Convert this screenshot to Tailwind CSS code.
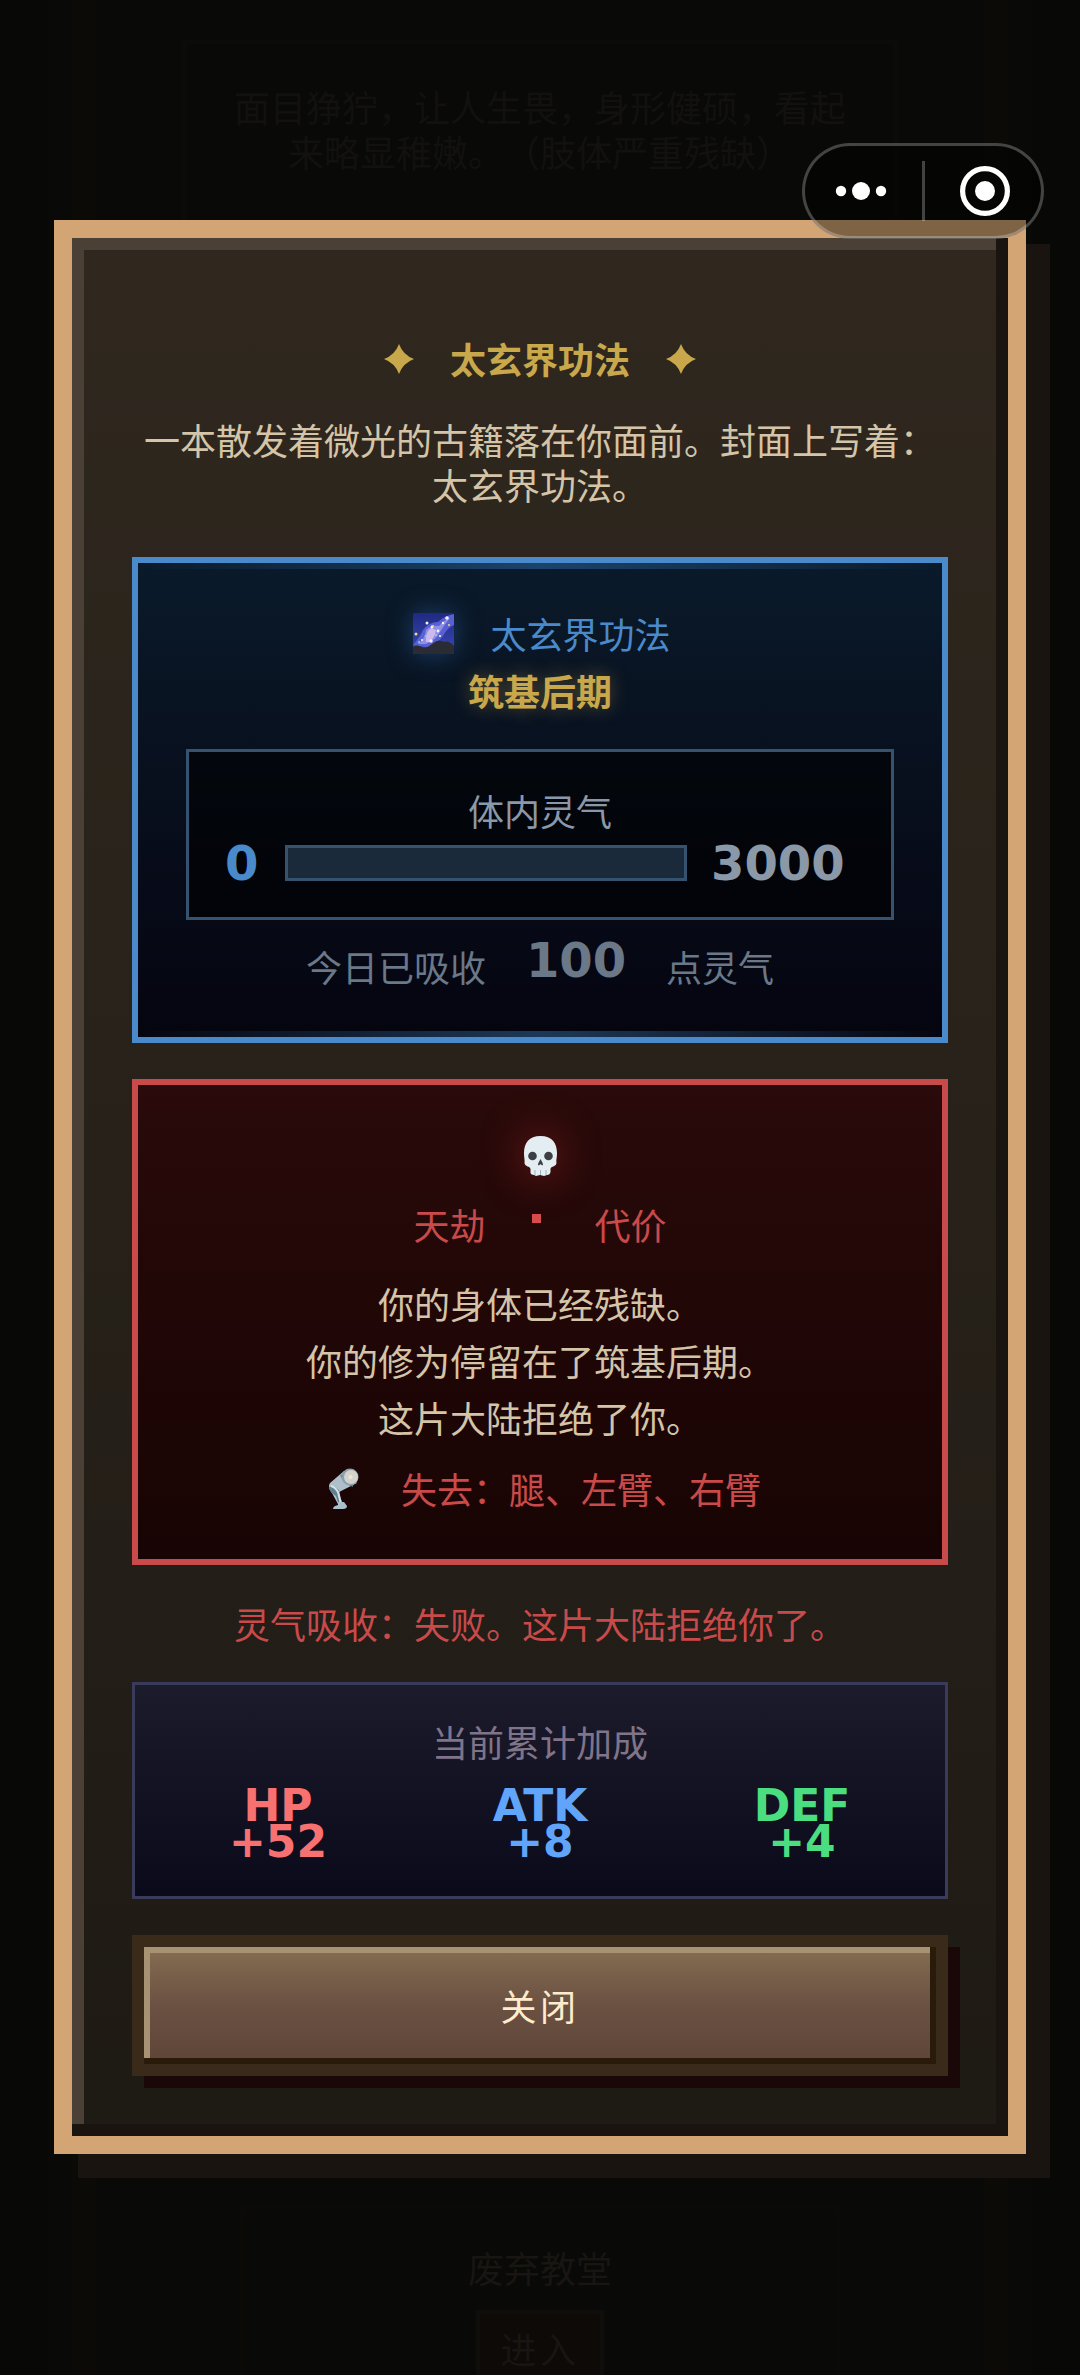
<!DOCTYPE html>
<html lang="zh-CN">
<head>
<meta charset="utf-8">
<meta name="viewport" content="width=device-width, initial-scale=1">
<title>太玄界功法</title>
<script src="https://cdn.jsdelivr.net/npm/@tailwindcss/browser@4"></script>
</head>
<body class="relative min-h-screen overflow-x-hidden bg-[#090907] font-['Noto_Sans_CJK_SC',sans-serif] text-4xl/[45px] [text-spacing-trim:space-all]">

  <!-- Dimmed game screen behind the dialog -->
  <div class="absolute inset-0 flex justify-center border-x-[48px] border-[#080806] px-6" aria-hidden="true">
    <div class="flex w-full flex-col items-center justify-between border-x-[24px] border-[#0b0a07] px-10">
      <div class="mt-10 w-full max-w-[716px] border-4 border-[#0c0b08] px-10 pt-10 pb-16 text-center text-[#12110f]">面目狰狞，让人生畏，身形健硕，看起来略显稚嫩。（肢体严重残缺）</div>
      <div class="flex w-full max-w-[600px] flex-col items-center gap-5 border-x-4 border-t-4 border-[#0c0a07] pt-9 text-[#181512]">
        <span>废弃教堂</span>
        <span class="border-4 border-b-0 border-[#100e0b] bg-[#0d0a08] px-5 pt-3 pb-1 tracking-widest">进入</span>
      </div>
    </div>
  </div>

  <!-- Dialog -->
  <div class="relative px-[5%] pt-[220px] pb-[220px]">
    <main role="dialog" aria-labelledby="title" class="border-[18px] border-[#d4a574] bg-linear-to-b from-[#30281f] to-[#1e1a14] shadow-[24px_24px_0_#1a1410]">
      <div class="flex flex-col px-[60px] pt-[98px] pb-[60px] text-center shadow-[inset_-12px_-12px_0_#1a1410,inset_12px_12px_0_#4a4035]">

        <h1 id="title" class="flex items-center justify-center gap-9 font-bold text-[#c9a84c]">
          <svg class="size-[30px]" viewBox="0 0 30 30" fill="currentColor"><path d="M15 0Q19 11 30 15Q19 19 15 30Q11 19 0 15Q11 11 15 0Z"/></svg>
          太玄界功法
          <svg class="size-[30px]" viewBox="0 0 30 30" fill="currentColor"><path d="M15 0Q19 11 30 15Q19 19 15 30Q11 19 0 15Q11 11 15 0Z"/></svg>
        </h1>
        <p class="mt-9 text-[#d4c4a8]">一本散发着微光的古籍落在你面前。封面上写着：<br>太玄界功法。</p>

        <!-- Technique card -->
        <section class="relative mt-[50px] border-[6px] border-[#4a8acb] bg-linear-to-b from-[#0a1a2a] to-[#050510] p-12">
          <div class="absolute inset-x-0 top-0 h-[6px] bg-linear-to-r from-transparent via-[#1c436b] to-transparent"></div>
          <div class="absolute inset-x-0 bottom-0 h-[6px] bg-linear-to-r from-transparent via-[#1c3858] to-transparent"></div>
          <h2 class="flex items-center justify-center gap-9 pl-1 text-[#4a8acb]">
            <svg class="size-[41px] drop-shadow-[0_0_12px_#2b64a888]" viewBox="0 0 41 41">
              <defs><linearGradient id="sky" x2="0" y2="1"><stop stop-color="#202a82"/><stop offset="1" stop-color="#3b49b8"/></linearGradient></defs>
              <rect width="41" height="41" rx="2" fill="url(#sky)"/>
              <path d="M0 32Q7 24 10 17Q16 9 25 9Q31 3 41 1V12Q34 15 30 23Q24 32 13 34Z" fill="#5960d2"/>
              <path d="M5 31Q12 26 13 17Q19 12 26 13Q31 7 37 5Q31 12 27 19Q23 27 13 31Z" fill="#8f8fe4"/>
              <path d="M13 29Q12 20 18 15L23 17Q22 25 16 29Z" fill="#d0b7ed"/>
              <g fill="#f6f2ff"><circle cx="14" cy="10" r="1.5"/><circle cx="19" cy="14" r="1.4"/><circle cx="25" cy="18" r="1.4"/><circle cx="30" cy="10" r="1.2"/><circle cx="34" cy="5" r="1.8"/><circle cx="18" cy="28" r="1.7"/><circle cx="27" cy="23" r="1.1"/><circle cx="9" cy="27" r="1"/></g>
              <g fill="#f3d978"><circle cx="3" cy="21" r="1.5"/><circle cx="20" cy="13" r="1"/><circle cx="36" cy="12" r="1"/></g>
              <g fill="#6edbe8"><circle cx="23" cy="22" r="1"/><circle cx="13" cy="23" r="1"/><circle cx="6" cy="29" r="1"/></g>
              <path d="M0 34Q4 31 9 34Q14 36 19 31Q25 25 31 29Q36 27 41 33V39Q41 41 39 41H2Q0 41 0 39Z" fill="#2b2b33"/>
            </svg>
            太玄界功法
          </h2>
          <p class="mt-3 font-bold text-[#c9a84c] [text-shadow:0_0_18px_#c9a84c66]">筑基后期</p>
          <div class="mt-9 border-[3px] border-[#35526e] bg-black/60 p-9">
            <div id="qi" class="text-[#8a98a8]">体内灵气</div>
            <div class="mt-3 flex h-9 items-center gap-6 font-['DejaVu_Sans',sans-serif] text-5xl/9 font-bold">
              <span class="w-9 text-left text-[#4a8acb]">0</span>
              <div role="progressbar" aria-labelledby="qi" aria-valuemin="0" aria-valuemax="3000" aria-valuenow="0" class="h-full flex-1 border-[3px] border-[#35526e] bg-[#1b2a3a]"></div>
              <span class="w-36 text-left text-[#8a98a8]">3000</span>
            </div>
          </div>
          <p class="mt-6 flex items-start justify-center gap-10 text-[#6a7888]">今日已吸收<b class="font-['DejaVu_Sans',sans-serif] text-5xl/8">100</b>点灵气</p>
        </section>

        <!-- Tribulation card -->
        <section class="mt-9 border-[6px] border-[#c94a4a] bg-linear-to-b from-[#2a0a0a] to-[#180404] p-12 text-[#c94a4a]">
          <svg class="mx-auto size-[45px] rounded-full drop-shadow-[0_0_20px_#7c1c1c]" viewBox="0 0 45 45">
            <path d="M22.500 3C11 3 6 10 6 20C6 25 7 27 6.500 30C7 34 12 33 12.500 36V40Q13 42 16 42L18 43L22 42L26 43L29 42Q32 42 32.500 39V36C33 33 38 34 38.500 30C38 27 39 25 39 20C39 10 34 3 22.500 3Z" fill="#e3edf2"/>
            <circle cx="14.500" cy="23" r="4.300" fill="#3c4043"/><circle cx="30.500" cy="23" r="4.300" fill="#3c4043"/>
            <path d="M22.500 26Q20 30 20 32Q21 33 22.500 31Q24 33 25 32Q25 30 22.500 26Z" fill="#3c4043"/>
            <path d="M17 37V42M22.500 37V42M28 37V42" stroke="#9fb4c0" stroke-width="1"/>
          </svg>
          <h2 class="mt-6 flex justify-center gap-[46px]">天劫<i class="mt-3 size-[9px] bg-[#d94c4c]"></i><span class="pl-2">代价</span></h2>
          <p class="mt-7 leading-[57px] text-[#d4c4a8]">你的身体已经残缺。<br>你的修为停留在了筑基后期。<br>这片大陆拒绝了你。</p>
          <p class="mt-5 flex items-center justify-center gap-10 pl-2">
            <svg class="h-[42px] w-[34px]" viewBox="0 0 34 42">
              <path d="M17 3L30 15L14 23L11 25L16 36L12 38L5 25Q0 19 3 15Z" fill="#aebfc9"/>
              <path d="M2 19Q7 17 12 22L14 31L16 36L12 38L9 28Q2 24 2 19Z" fill="#60808f"/>
              <path d="M4 18Q8 19 11 24L14 36" fill="none" stroke="#d5e3e9" stroke-width="2"/>
              <path d="M14 7Q18 15 26 18" fill="none" stroke="#5c7c8b" stroke-width="2"/>
              <circle cx="23" cy="9" r="8.500" fill="#89a1ad"/><circle cx="24" cy="9" r="7" fill="#d5d2cd"/><circle cx="23.500" cy="9" r="2" fill="#e9e5dd"/>
              <path d="M11 34H17L20 38Q20 41 16 41H6Q6 38 11 37Z" fill="#a8c0cb"/>
            </svg>
            失去：腿、左臂、右臂
          </p>
        </section>

        <p class="mt-9 text-[#c94a4a]">灵气吸收：失败。这片大陆拒绝你了。</p>

        <!-- Bonus card -->
        <section class="mt-9 border-[3px] border-[#3a3a5a] bg-linear-to-b from-[#1c1b2c] to-[#0a0a1a] px-3 pt-[34px] pb-9">
          <h2 class="text-[#807488]">当前累计加成</h2>
          <dl class="mt-6 grid grid-cols-3 font-['DejaVu_Sans',sans-serif] text-[44px]/9 font-bold">
            <div class="text-[#f87171]"><dt>HP</dt><dd>+52</dd></div>
            <div class="text-[#60a5fa]"><dt>ATK</dt><dd>+8</dd></div>
            <div class="text-[#4ade80]"><dt>DEF</dt><dd>+4</dd></div>
          </dl>
        </section>

        <button type="button" class="mt-9 border-[12px] border-[#3a2a1a] bg-linear-to-b from-[#8b7355] via-[#6b5142] to-[#5a4235] bg-origin-border py-9 tracking-widest text-[#ffeccc] shadow-[12px_12px_0_#1a0808,inset_-6px_-6px_0_#2a1a0a,inset_6px_6px_0_#a89274]">关闭</button>
      </div>
    </main>
  </div>

  <!-- Mini-program capsule -->
  <div class="absolute top-[143px] right-9 flex h-24 w-[242px] items-center rounded-full border-[3px] border-white/25 bg-black/40 text-white">
    <button type="button" aria-label="更多" class="flex h-full flex-1 items-center justify-center pr-1">
      <svg class="h-5 w-[52px]" viewBox="0 0 52 20" fill="currentColor"><circle cx="6" cy="10" r="5.200"/><circle cx="26" cy="10" r="9"/><circle cx="46" cy="10" r="5.200"/></svg>
    </button>
    <div class="h-[60px] w-[3px] bg-white/25"></div>
    <button type="button" aria-label="关闭小程序" class="flex h-full flex-1 items-center justify-center pl-1">
      <svg class="size-[50px]" viewBox="0 0 50 50"><circle cx="25" cy="25" r="22.400" fill="none" stroke="currentColor" stroke-width="5.200"/><circle cx="25" cy="25" r="10" fill="currentColor"/></svg>
    </button>
  </div>
</body>
</html>
